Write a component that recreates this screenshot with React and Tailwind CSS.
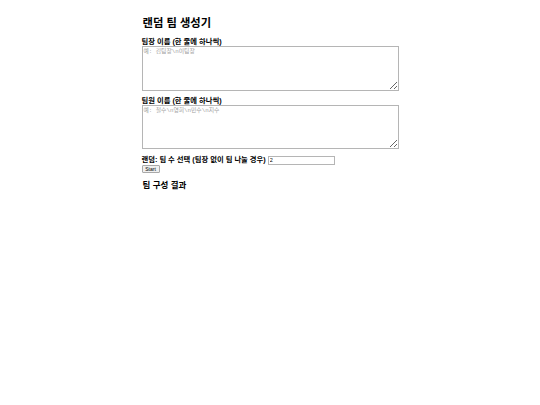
import { useState } from "react";

const App = () => {
  const [leaders, setLeaders] = useState("");
  const [members, setMembers] = useState("");
  const [count, setCount] = useState("2");

  return (
    <div
      className="min-h-screen bg-white text-black"
      style={{ fontFamily: '"Liberation Sans", "Noto Sans CJK KR", sans-serif' }}
    >
      <div className="w-[257px] mx-auto pt-[16px] flex flex-col">
        <h2 className="text-[11.3px] font-bold leading-[14px] mb-[8px] ml-[1px]">랜덤 팀 생성기</h2>

        <label className="text-[7.3px] font-bold leading-[8px]">팀장 이름 (한 줄에 하나씩)</label>
        <textarea
          value={leaders}
          onChange={(e) => setLeaders(e.target.value)}
          placeholder="예: 김팀장\n이팀장"
          className="w-full h-[45px] border border-[#b5b5b5] text-[5.8px] px-[1px] py-[1px] placeholder:text-[#a0a0a0] outline-none font-['Liberation_Mono','Noto_Sans_CJK_KR',monospace]"
        />

        <label className="text-[7.3px] font-bold leading-[8px] mt-[6px]">팀원 이름 (한 줄에 하나씩)</label>
        <textarea
          value={members}
          onChange={(e) => setMembers(e.target.value)}
          placeholder="예: 철수\n영희\n민수\n지수"
          className="w-full h-[44px] border border-[#b5b5b5] text-[5.8px] px-[1px] py-[1px] placeholder:text-[#a0a0a0] outline-none font-['Liberation_Mono','Noto_Sans_CJK_KR',monospace]"
        />

        <div className="flex items-center mt-[6px] h-[10px]">
          <span className="text-[7.3px] font-bold leading-[8px]">랜덤: 팀 수 선택 (팀장 없이 팀 나눌 경우)</span>
          <input
            type="number"
            value={count}
            onChange={(e) => setCount(e.target.value)}
            className="ml-[2px] w-[67px] h-[9px] border border-[#b5b5b5] text-[5.5px] px-[1px] outline-none"
          />
        </div>

        <button className="block self-start mt-[0px] h-[8px] w-[18px] text-[5px] leading-none border border-[#a9a9a9] rounded-[1px] bg-[#efefef]">
          Start
        </button>

        <h3 className="text-[8.5px] font-bold leading-[10px] mt-[7px] ml-[1px]">팀 구성 결과</h3>
      </div>
    </div>
  );
};

export default App;
